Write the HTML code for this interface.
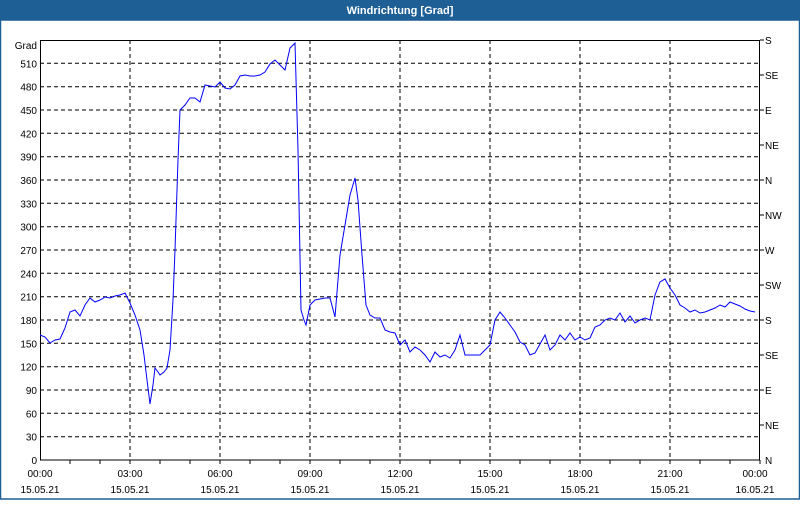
<!DOCTYPE html>
<html><head><style>
body{margin:0;width:800px;height:500px;overflow:hidden;background:#fff;font-family:"Liberation Sans",sans-serif}
</style></head><body>
<svg width="800" height="500" xmlns="http://www.w3.org/2000/svg" font-family="Liberation Sans, sans-serif" font-size="10">
<rect x="0" y="0" width="800" height="500" fill="#fff"/>
<rect x="0" y="0" width="800" height="20" fill="#1e5f96"/>
<rect x="0.5" y="20" width="799" height="479" fill="none" stroke="#1e5f96" stroke-width="1.5"/>
<text x="400" y="14" text-anchor="middle" fill="#fff" font-weight="bold" font-size="11">Windrichtung [Grad]</text>
<g stroke="#000" stroke-dasharray="4,3" stroke-width="1">
<line x1="40" x2="760" y1="436.7" y2="436.7"/><line x1="40" x2="760" y1="413.3" y2="413.3"/><line x1="40" x2="760" y1="390" y2="390"/><line x1="40" x2="760" y1="366.7" y2="366.7"/><line x1="40" x2="760" y1="343.3" y2="343.3"/><line x1="40" x2="760" y1="320" y2="320"/><line x1="40" x2="760" y1="296.7" y2="296.7"/><line x1="40" x2="760" y1="273.3" y2="273.3"/><line x1="40" x2="760" y1="250" y2="250"/><line x1="40" x2="760" y1="226.7" y2="226.7"/><line x1="40" x2="760" y1="203.3" y2="203.3"/><line x1="40" x2="760" y1="180" y2="180"/><line x1="40" x2="760" y1="156.7" y2="156.7"/><line x1="40" x2="760" y1="133.3" y2="133.3"/><line x1="40" x2="760" y1="110" y2="110"/><line x1="40" x2="760" y1="86.7" y2="86.7"/><line x1="40" x2="760" y1="63.3" y2="63.3"/>
<line x1="130" x2="130" y1="40" y2="460"/><line x1="220" x2="220" y1="40" y2="460"/><line x1="310" x2="310" y1="40" y2="460"/><line x1="400" x2="400" y1="40" y2="460"/><line x1="490" x2="490" y1="40" y2="460"/><line x1="580" x2="580" y1="40" y2="460"/><line x1="670" x2="670" y1="40" y2="460"/>
</g>
<rect x="40.5" y="40.5" width="719" height="419.5" fill="none" stroke="#000" stroke-width="1"/>
<g stroke="#000"><path d="M70 460v4M100 460v4M130 460v4M160 460v4M190 460v4M220 460v4M250 460v4M280 460v4M310 460v4M340 460v4M370 460v4M400 460v4M430 460v4M460 460v4M490 460v4M520 460v4M550 460v4M580 460v4M610 460v4M640 460v4M670 460v4M700 460v4M730 460v4M760 460v4M760 40h4M760 75h4M760 110h4M760 145h4M760 180h4M760 215h4M760 250h4M760 285h4M760 320h4M760 355h4M760 390h4M760 425h4"/></g>
<g text-anchor="end" fill="#000">
<text x="37" y="49">Grad</text>
<text x="37" y="464">0</text><text x="37" y="440.7">30</text><text x="37" y="417.3">60</text><text x="37" y="394">90</text><text x="37" y="370.7">120</text><text x="37" y="347.3">150</text><text x="37" y="324">180</text><text x="37" y="300.7">210</text><text x="37" y="277.3">240</text><text x="37" y="254">270</text><text x="37" y="230.7">300</text><text x="37" y="207.3">330</text><text x="37" y="184">360</text><text x="37" y="160.7">390</text><text x="37" y="137.3">420</text><text x="37" y="114">450</text><text x="37" y="90.7">480</text><text x="37" y="67.3">510</text>
</g>
<g fill="#000">
<text x="765" y="44">S</text><text x="765" y="79">SE</text><text x="765" y="114">E</text><text x="765" y="149">NE</text><text x="765" y="184">N</text><text x="765" y="219">NW</text><text x="765" y="254">W</text><text x="765" y="289">SW</text><text x="765" y="324">S</text><text x="765" y="359">SE</text><text x="765" y="394">E</text><text x="765" y="429">NE</text><text x="765" y="464">N</text>
</g>
<g text-anchor="middle" fill="#000">
<text x="40" y="477">00:00</text><text x="130" y="477">03:00</text><text x="220" y="477">06:00</text><text x="310" y="477">09:00</text><text x="400" y="477">12:00</text><text x="490" y="477">15:00</text><text x="580" y="477">18:00</text><text x="670" y="477">21:00</text><text x="755" y="477">00:00</text>
<text x="40" y="493">15.05.21</text><text x="130" y="493">15.05.21</text><text x="220" y="493">15.05.21</text><text x="310" y="493">15.05.21</text><text x="400" y="493">15.05.21</text><text x="490" y="493">15.05.21</text><text x="580" y="493">15.05.21</text><text x="670" y="493">15.05.21</text><text x="755" y="493">16.05.21</text>
</g>
<polyline fill="none" stroke="#0000ff" stroke-width="1" points="40,335 45,337 50,343 55,340 60,339 65,328 70,312 75,310 80,316 85,305 90,298 95,302 100,300 105,297 110,298 115,296 120,295 125,293 130,303 135,315 140,330 144,355 147,380 150,404 153,385 155,368 158,372 160,375 164,372 167,368 170,350 173,300 175,250 178,160 180,110 185,105 190,98 195,98 200,102 205,85 210,86 215,87 220,82 225,88 230,89 235,85 240,76 245,75 250,76 255,76 260,75 265,72 270,64 275,60 280,65 285,70 290,48 295,43 298,150 301,310 304,320 306,325 310,305 315,300 320,299 325,298 330,298 335,317 340,255 345,225 350,195 355,178 358,200 362,255 366,305 370,315 375,318 380,318 385,330 390,332 395,333 400,345 405,340 410,352 415,347 420,350 425,355 430,362 435,352 440,357 445,355 450,358 455,350 460,335 465,355 470,355 475,355 480,355 485,350 490,345 495,320 500,312 505,318 510,325 515,332 520,342 525,345 530,355 535,353 540,344 545,335 550,350 555,345 560,335 565,340 570,333 575,340 580,337 585,340 590,338 595,327 600,325 605,320 610,318 615,320 620,313 625,322 630,316 635,323 640,320 645,318 650,320 655,295 660,282 665,279 670,288 675,295 680,305 685,308 690,312 695,310 700,313 705,312 710,310 715,308 720,305 725,307 730,302 735,304 740,306 745,309 750,311 755,312"/>
</svg>
</body></html>
